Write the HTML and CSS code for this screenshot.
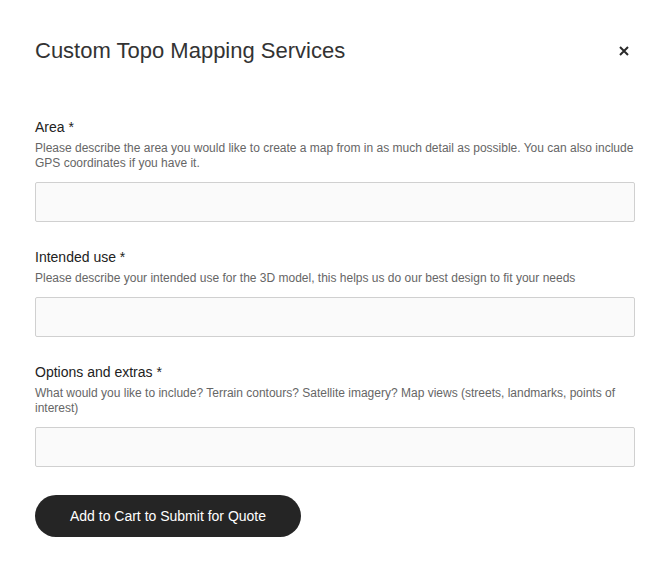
FILE: index.html
```html
<!DOCTYPE html>
<html>
<head>
<meta charset="utf-8">
<link rel="stylesheet" href="styles.css">
</head>
<body>
<div class="modal">
  <div class="header">
    <h1 class="title">Custom Topo Mapping Services</h1>
    <button class="close" aria-label="Close">
      <svg width="10" height="10" viewBox="0 0 10 10"><path d="M1 1L9 9M9 1L1 9" stroke="#2a2a2a" stroke-width="2" fill="none"/></svg>
    </button>
  </div>
  <form class="form">
    <div class="field">
      <label class="label">Area *</label>
      <p class="help">Please describe the area you would like to create a map from in as much detail as possible. You can also include GPS coordinates if you have it.</p>
      <input class="input" type="text">
    </div>
    <div class="field">
      <label class="label">Intended use *</label>
      <p class="help">Please describe your intended use for the 3D model, this helps us do our best design to fit your needs</p>
      <input class="input" type="text">
    </div>
    <div class="field">
      <label class="label">Options and extras *</label>
      <p class="help">What would you like to include? Terrain contours? Satellite imagery? Map views (streets, landmarks, points of interest)</p>
      <input class="input" type="text">
    </div>
    <button class="submit" type="button">Add to Cart to Submit for Quote</button>
  </form>
</div>
</body>
</html>
```
FILE: styles.css
```css
* { box-sizing: border-box; }
html, body { margin: 0; padding: 0; background: #fff; }
body { font-family: "Liberation Sans", Arial, sans-serif; color: #222; }
.modal { width: 670px; padding: 36px 35px 0 35px; }
.header { display: flex; justify-content: space-between; align-items: center; height: 30px; }
.title { margin: 0; font-size: 22px; font-weight: 400; color: #333; line-height: 30px; }
.close { background: none; border: 0; padding: 0; margin-right: 6px; width: 10px; height: 10px; display: flex; }
.form { display: flex; flex-direction: column; margin-top: 53px; }
.field { display: flex; flex-direction: column; margin-bottom: 27px; }
.label { font-size: 14px; line-height: 17px; color: #222; }
.help { margin: 5px 0 0; font-size: 12px; line-height: 15px; color: #666; }
.input { margin-top: 11px; height: 40px; width: 600px; border: 1px solid #d0d0d0; border-radius: 2px; background: #fafafa; }
.submit { align-self: flex-start; margin-top: 1px; width: 266px; height: 42px; border-radius: 21px; border: 0; background: #252525; color: #fff; font-family: "Liberation Sans", Arial, sans-serif; font-size: 14px; }
```
